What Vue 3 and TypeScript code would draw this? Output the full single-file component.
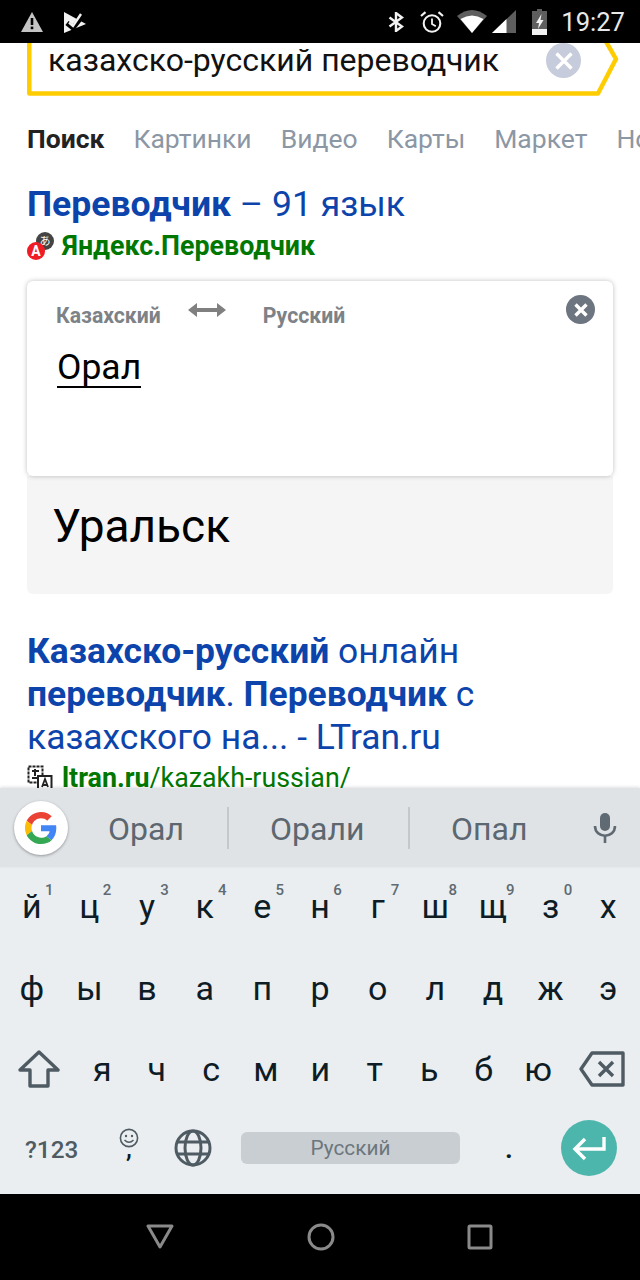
<template>
  <div class="phone">
    <header class="status-bar">
      <svg width="22" height="20" viewBox="0 0 22 20"><path d="M11 0 L22 20 H0 Z" fill="#c4c4c4" /><rect x="9.7" y="6" width="2.6" height="7" fill="#000" /><rect x="9.7" y="14.6" width="2.6" height="2.6" fill="#000" /></svg>
      <svg class="st-play" width="22" height="22" viewBox="0 0 22 22"><path d="M0 1 L22 13 L0 22 Z" fill="#f2f2f2" /><path d="M3 12 L9 17 L20 3" fill="none" stroke="#000" stroke-width="5" /><path d="M5 11.5 L9 15 L17 3" fill="none" stroke="#f2f2f2" stroke-width="2.4" /></svg>
      <svg class="st-bt" width="16" height="20" viewBox="0 0 16 20"><path d="M1.5 5.5 L14 14.5 L8 19 V1 L14 5.5 L1.5 14.5" fill="none" stroke="#f2f2f2" stroke-width="2.4" /></svg>
      <svg class="st-alarm" width="24" height="22" viewBox="0 0 24 22"><circle cx="12" cy="12.5" r="8.3" fill="none" stroke="#f2f2f2" stroke-width="2.1" /><path d="M12 7.5 V13 L15.8 15.3" fill="none" stroke="#f2f2f2" stroke-width="1.8" /><path d="M1 5 L5.5 1.2 M23 5 L18.5 1.2" stroke="#f2f2f2" stroke-width="2.2" /></svg>
      <svg class="st-wifi" width="30" height="23" viewBox="0 0 30 23"><path d="M0 6 Q15 -6 30 6 L15 23 Z" fill="#5e5e5e" /><path d="M3.5 9 Q15 2 26.5 9 L15 23 Z" fill="#fff" /></svg>
      <svg class="st-signal" width="24" height="23" viewBox="0 0 24 23"><path d="M24 0 V23 H0 Z" fill="#5e5e5e" /><path d="M14.5 9 V23 H0 Z" fill="#fff" /></svg>
      <svg class="st-batt" width="15" height="26" viewBox="0 0 15 26"><path d="M5 0 H10 V2 H15 V26 H0 V2 H5 Z" fill="#5e5e5e" /><rect y="20" width="15" height="6" fill="#f2f2f2" /><path d="M9.5 5 L4 14 H7 L6 20 L11.5 11 H8.5 Z" fill="#f2f2f2" /></svg>
      <span class="st-time">19:27</span>
    </header>

    <main class="web">
      <div class="search">
        <svg class="search-frame" width="600" height="60" viewBox="0 0 600 60"><path d="M2.3 -10 V50.5 H571 L589 16 L574 -10" fill="none" stroke="#fc0" stroke-width="4.5" stroke-linejoin="round" /></svg>
        <span class="search-text">казахско-русский переводчик</span>
        <span class="search-clear">
          <svg width="20" height="20" viewBox="0 0 20 20"><path d="M2.5 2.5 L17.5 17.5 M17.5 2.5 L2.5 17.5" stroke="#fff" stroke-width="3.4" /></svg>
        </span>
      </div>

      <nav class="tabs">
        <span v-for="(t, i) in tabs" :key="t" class="tab" :class="{ active: i === 0 }">{{ t }}</span>
      </nav>

      <a class="title"><b>Переводчик</b> – 91 язык</a>
      <div class="source">
        <svg class="fav" width="28" height="28" viewBox="0 0 28 28">
          <circle cx="18" cy="9" r="9" fill="#444" />
          <text x="18" y="13" class="fav-ja">あ</text>
          <circle cx="9" cy="19" r="9" fill="#f01c25" />
          <text x="9" y="24" class="fav-a">A</text>
        </svg>
        <b>Яндекс.Переводчик</b>
      </div>

      <section class="card">
        <div class="langs">
          <span class="lang">Казахский</span>
          <svg class="swap" width="38" height="14" viewBox="0 0 38 14"><path d="M0 7 L9 0 V5 H29 V0 L38 7 L29 14 V9 H9 V14 Z" fill="#808080" /></svg>
          <span class="lang">Русский</span>
          <span class="card-clear">
            <svg width="16" height="16" viewBox="0 0 16 16"><path d="M2.5 2.5 L13.5 13.5 M13.5 2.5 L2.5 13.5" stroke="#fff" stroke-width="3.4" /></svg>
          </span>
        </div>
        <span class="input-word">Орал</span>
      </section>
      <section class="answer">Уральск</section>

      <a class="result"><b>Казахско-русский</b> онлайн <b>переводчик</b>. <b>Переводчик</b> с казахского на... - LTran.ru</a>
      <div class="source second">
        <svg class="fav2" width="26" height="26" viewBox="0 0 26 26">
          <path d="M1.5 1.5 H15.5 V17.5 H1.5 Z" fill="#fff" stroke="#222" stroke-width="2" stroke-dasharray="3 1" />
          <path d="M5 6 H12 M8 4 V11 M5 13 H12" stroke="#222" stroke-width="2" fill="none" />
          <path d="M11 11 H24.5 V25 H11 Z" fill="#fff" stroke="#222" stroke-width="2" />
          <path d="M15 22 L18 14 L21 22 M16 20 H20" stroke="#222" stroke-width="1.8" fill="none" />
        </svg>
        <span><b>ltran.ru</b>/kazakh-russian/</span>
      </div>
    </main>

    <section class="keyboard">
      <div class="suggest">
        <span class="g-badge">
          <svg width="32" height="32" viewBox="0 0 48 48">
            <path fill="#EA4335" d="M24 9.5c3.54 0 6.71 1.22 9.21 3.6l6.85-6.85C35.9 2.38 30.47 0 24 0 14.62 0 6.51 5.38 2.56 13.22l7.98 6.19C12.43 13.72 17.74 9.5 24 9.5z" />
            <path fill="#4285F4" d="M46.98 24.55c0-1.57-.15-3.09-.38-4.55H24v9.02h12.94c-.58 2.96-2.26 5.48-4.78 7.18l7.73 6c4.51-4.18 7.09-10.36 7.09-17.65z" />
            <path fill="#FBBC05" d="M10.53 28.59c-.48-1.45-.76-2.99-.76-4.59s.27-3.14.76-4.59l-7.98-6.19C.92 16.46 0 20.12 0 24c0 3.88.92 7.54 2.56 10.78l7.97-6.19z" />
            <path fill="#34A853" d="M24 48c6.48 0 11.93-2.13 15.89-5.81l-7.73-6c-2.15 1.45-4.92 2.3-8.16 2.3-6.26 0-11.57-4.22-13.47-9.91l-7.98 6.19C6.51 42.62 14.62 48 24 48z" />
          </svg>
        </span>
        <span class="word first">Орал</span>
        <i class="sep" />
        <span class="word">Орали</span>
        <i class="sep" />
        <span class="word">Опал</span>
        <svg class="mic" width="26" height="32" viewBox="0 0 26 32"><rect x="8" y="1" width="10" height="18" rx="5" fill="#5f6a72" /><path d="M3 14 C3 27 23 27 23 14" fill="none" stroke="#5f6a72" stroke-width="2.6" /><path d="M13 23 V31" stroke="#5f6a72" stroke-width="2.6" /></svg>
      </div>

      <div class="row row-1">
        <span v-for="(k, i) in row1" :key="k" class="key">{{ k }}<sup v-if="i < 10" class="hint">{{ (i + 1) % 10 }}</sup></span>
      </div>
      <div class="row row-2">
        <span v-for="k in row2" :key="k" class="key">{{ k }}</span>
      </div>
      <div class="row row-3">
        <span class="key">
          <svg class="key-icon" width="42" height="38" viewBox="0 0 42 38"><path d="M21 2 L40 20 H30 V36 H12 V20 H2 Z" fill="none" stroke="#4f5b62" stroke-width="3.4" stroke-linejoin="round" /></svg>
        </span>
        <span v-for="k in row3" :key="k" class="key">{{ k }}</span>
        <span class="key">
          <svg class="key-icon" width="46" height="36" viewBox="0 0 46 36"><path d="M13 2 H44 V34 H13 L2 18 Z" fill="none" stroke="#4f5b62" stroke-width="3.4" stroke-linejoin="round" /><path d="M20 11 L34 25 M34 11 L20 25" stroke="#4f5b62" stroke-width="3.4" /></svg>
        </span>
      </div>
      <div class="row row-4">
        <span class="sym">?123</span>
        <span class="comma">
          <svg width="20" height="20" viewBox="0 0 20 20"><circle cx="10" cy="10" r="8.6" fill="none" stroke="#4f5b62" stroke-width="1.6" /><circle cx="7" cy="8" r="1.2" fill="#4f5b62" /><circle cx="13" cy="8" r="1.2" fill="#4f5b62" /><path d="M5.5 12 Q10 16.5 14.5 12" fill="none" stroke="#4f5b62" stroke-width="1.5" /></svg>
          <span class="comma-mark">,</span>
        </span>
        <svg class="globe" width="38" height="38" viewBox="0 0 38 38" fill="none" stroke="#4f5b62" stroke-width="3"><circle cx="19" cy="19" r="17" /><ellipse cx="19" cy="19" rx="8" ry="17" /><path d="M3 13 H35 M3 25 H35" /></svg>
        <span class="space">Русский</span>
        <span class="dot">.</span>
        <span class="enter">
          <svg width="34" height="26" viewBox="0 0 34 26" fill="none" stroke="#fff" stroke-width="3.4"><path d="M32 2 V14 H4" /><path d="M13 4 L3 14 L13 24" /></svg>
        </span>
      </div>
    </section>

    <footer class="nav-bar">
      <svg width="28" height="26" viewBox="0 0 28 26"><path d="M2 2 H26 L14 23 Z" fill="none" stroke="#8a8a8a" stroke-width="3" stroke-linejoin="round" /></svg>
      <svg width="28" height="28" viewBox="0 0 28 28"><circle cx="14" cy="14" r="12" fill="none" stroke="#8a8a8a" stroke-width="3" /></svg>
      <svg width="26" height="26" viewBox="0 0 26 26"><rect x="2" y="2" width="22" height="22" rx="1" fill="none" stroke="#8a8a8a" stroke-width="3" /></svg>
    </footer>
  </div>
</template>

<script setup lang="ts">
const tabs: string[] = ['Поиск', 'Картинки', 'Видео', 'Карты', 'Маркет', 'Новости']

const row1: string[] = ['й', 'ц', 'у', 'к', 'е', 'н', 'г', 'ш', 'щ', 'з', 'х']
const row2: string[] = ['ф', 'ы', 'в', 'а', 'п', 'р', 'о', 'л', 'д', 'ж', 'э']
const row3: string[] = ['я', 'ч', 'с', 'м', 'и', 'т', 'ь', 'б', 'ю']
</script>

<style>
html, body {
  margin: 0;
  background: #fff;
}
</style>

<style scoped>
.phone {
  width: 640px;
  height: 1280px;
  display: flex;
  flex-direction: column;
  overflow: hidden;
  font-family: Roboto, "Noto Sans", sans-serif;
}

.status-bar {
  height: 43px;
  flex: none;
  background: #000;
  display: flex;
  align-items: center;
  padding: 0 15px 0 21px;
}
.st-play { margin-left: 21px; }
.st-bt { margin-left: auto; }
.st-alarm { margin-left: 16px; }
.st-wifi { margin-left: 13px; }
.st-signal { margin-left: 5px; }
.st-batt { margin-left: 16px; }
.st-time {
  margin-left: 14px;
  color: #e8e8e8;
  font-size: 25.6px;
}

.web {
  height: 745px;
  flex: none;
  overflow: hidden;
  background: #fff;
  padding: 0 27px;
  box-sizing: border-box;
}

.search {
  height: 53px;
  position: relative;
  display: flex;
  align-items: flex-start;
  padding: 0 21px;
}
.search-frame {
  position: absolute;
  left: 0;
  top: 0;
}
.search-text {
  font-size: 32px;
  line-height: 34px;
  color: #111;
}
.search-clear {
  position: absolute;
  left: 519px;
  top: 0;
  width: 35px;
  height: 35px;
  border-radius: 50%;
  background: #c6ccdb;
  display: flex;
  align-items: center;
  justify-content: center;
}

.tabs {
  display: flex;
  gap: 29px;
  margin-top: 28px;
  font-size: 26.5px;
  line-height: 30px;
  color: #8c97a5;
  white-space: nowrap;
}
.tab.active {
  color: #222;
  font-weight: 700;
}

.title {
  display: block;
  margin-top: 30px;
  font-size: 35.5px;
  line-height: 40px;
  color: #0c44ac;
}
.source {
  display: flex;
  align-items: center;
  height: 32px;
  margin-top: 6px;
  font-size: 26.8px;
  color: #007700;
  white-space: nowrap;
}
.fav { margin-right: 7px; flex: none; }
.fav-ja { font-size: 11px; fill: #fff; text-anchor: middle; font-family: "Noto Sans CJK JP", sans-serif; }
.fav-a { font-size: 14px; font-weight: 700; fill: #fff; text-anchor: middle; }

.card {
  height: 195px;
  box-sizing: border-box;
  margin-top: 19px;
  background: #fff;
  border-radius: 6px;
  box-shadow: 0 0 5px rgba(0, 0, 0, 0.25);
  padding: 22px 29px 0;
  position: relative;
  z-index: 1;
}
.langs {
  display: flex;
  align-items: center;
  height: 24px;
  font-size: 21.2px;
  font-weight: 700;
  color: #7d8287;
}
.swap { margin: -10px 37px 0 27px; }
.card-clear {
  position: absolute;
  right: 18px;
  top: 14px;
  width: 29px;
  height: 29px;
  border-radius: 50%;
  background: #6d7580;
  display: flex;
  align-items: center;
  justify-content: center;
}
.input-word {
  display: inline-block;
  margin: 21px 0 0 1px;
  font-size: 35.5px;
  line-height: 38px;
  color: #000;
  border-bottom: 2px solid #000;
}

.answer {
  height: 118px;
  box-sizing: border-box;
  background: #f5f5f5;
  border-radius: 0 0 6px 6px;
  padding: 23px 25px 0;
  font-size: 46px;
  line-height: 54px;
  color: #000;
}

.result {
  display: block;
  margin-top: 36px;
  font-size: 35.4px;
  line-height: 43px;
  color: #0c44ac;
}
.source.second { margin-top: 3px; }
.fav2 { margin-right: 9px; flex: none; }

.keyboard {
  height: 406px;
  flex: none;
  background: #eaeef1;
  color: #0e1c26;
}
.suggest {
  height: 79px;
  background: #e0e3e6;
  display: flex;
  align-items: center;
  box-shadow: 0 -1px 3px rgba(0, 0, 0, 0.12);
  position: relative;
}
.g-badge {
  width: 54px;
  height: 54px;
  margin-left: 14px;
  flex: none;
  border-radius: 50%;
  background: #fff;
  box-shadow: 0 1px 3px rgba(0, 0, 0, 0.35);
  display: flex;
  align-items: center;
  justify-content: center;
}
.word {
  width: 179px;
  flex: none;
  box-sizing: border-box;
  padding: 2px 0 0 41px;
  font-size: 32px;
  color: #5c6770;
}
.word.first { width: 160px; margin-left: -1px; }
.sep {
  width: 2px;
  height: 42px;
  flex: none;
  background: #c3c8cc;
}
.mic { margin-left: auto; margin-right: 22px; }

.row {
  height: 81px;
  box-sizing: border-box;
  display: grid;
  padding: 0 3px;
  align-items: center;
}
.row-1 { grid-template-columns: repeat(11, 1fr); padding-bottom: 4px; }
.row-2 { grid-template-columns: repeat(11, 1fr); padding-bottom: 2px; }
.row-3 { grid-template-columns: 72px repeat(9, 54.5px) 72px; padding-bottom: 2px; }
.row-4 {
  height: 84px;
  display: flex;
  padding: 0 0 9px;
}
.key {
  position: relative;
  text-align: center;
  font-size: 34px;
  line-height: 40px;
}
.key-icon {
  display: block;
  margin: 0 auto;
}
.hint {
  position: absolute;
  left: 42px;
  top: -5px;
  font-size: 15px;
  font-weight: 500;
  line-height: 18px;
  color: #5f6a72;
}
.sym {
  margin-left: 25px;
  width: 52px;
  padding-top: 3px;
  white-space: nowrap;
  font-size: 24.3px;
  font-weight: 500;
  color: #4f5b62;
}
.comma {
  width: 20px;
  margin-left: 42px;
  display: flex;
  flex-direction: column;
  align-items: center;
}
.comma-mark {
  height: 20px;
  font-size: 26px;
  font-weight: 500;
  line-height: 0;
}
.globe { margin-left: 35px; flex: none; }
.space {
  width: 219px;
  height: 32px;
  margin-left: 29px;
  flex: none;
  border-radius: 6px;
  background: #c9ced2;
  text-align: center;
  font-size: 20.8px;
  line-height: 33px;
  color: #6c767d;
}
.dot {
  width: 98px;
  text-align: center;
  font-size: 30px;
  font-weight: 500;
}
.enter {
  width: 56px;
  height: 56px;
  margin-left: 3px;
  flex: none;
  border-radius: 50%;
  background: #4db6ac;
  display: flex;
  align-items: center;
  justify-content: center;
}

.nav-bar {
  flex: 1;
  background: #000;
  display: flex;
  align-items: center;
  justify-content: space-between;
  padding: 0 147px 0 146px;
}
</style>
